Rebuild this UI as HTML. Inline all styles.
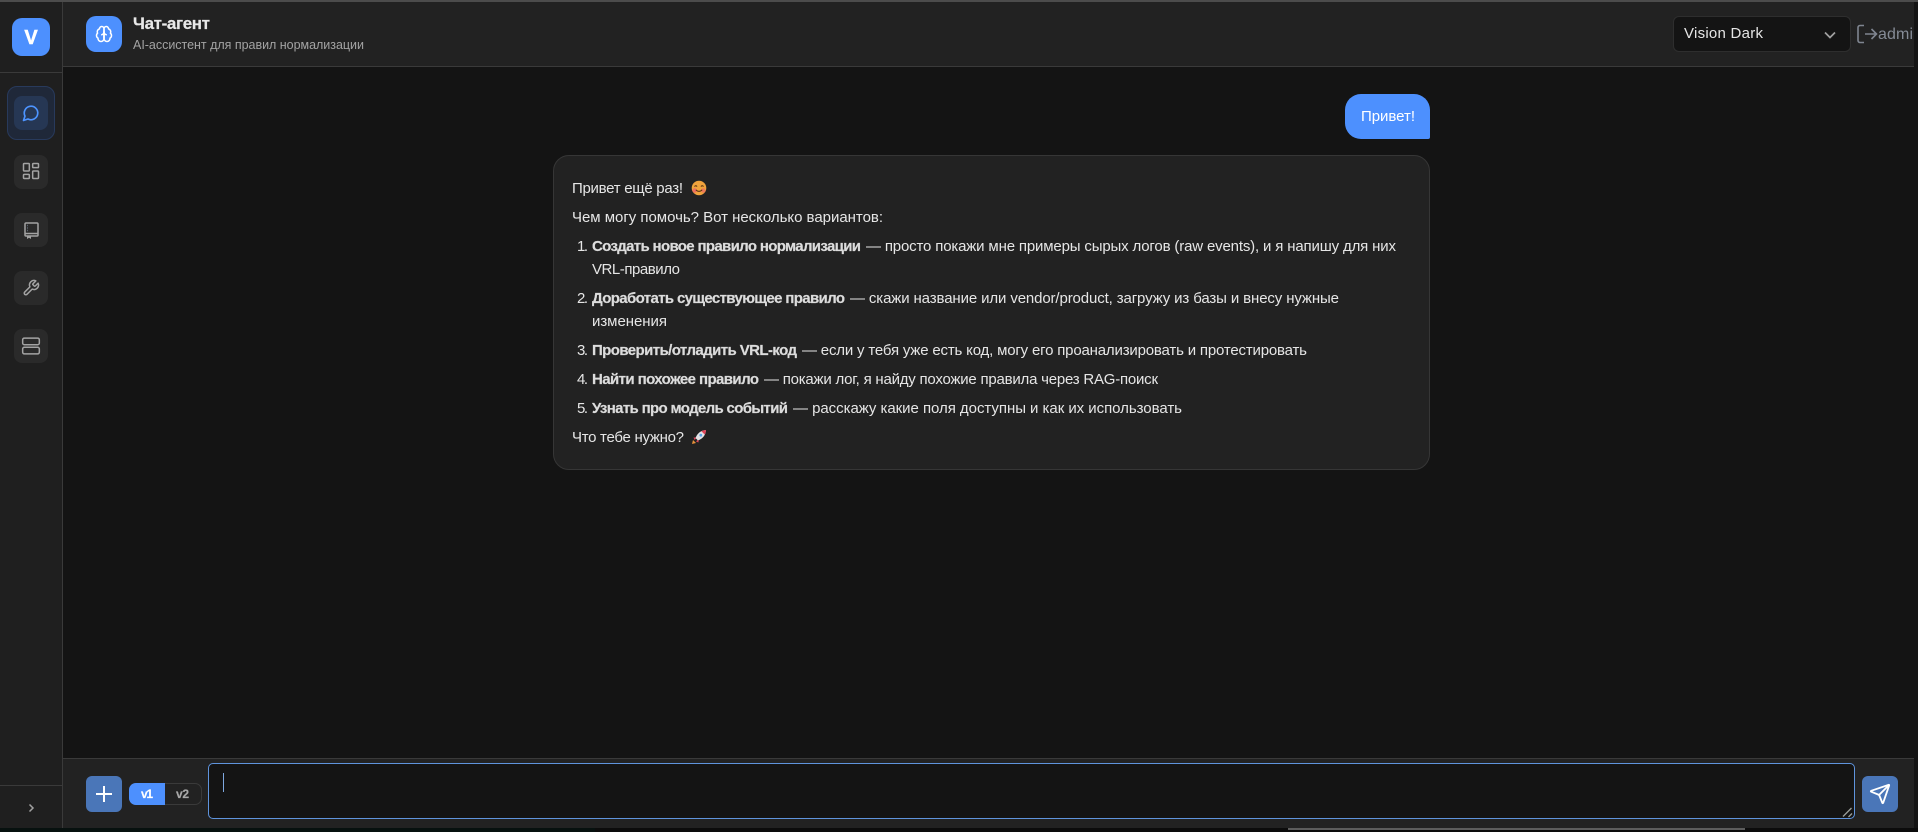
<!DOCTYPE html>
<html lang="ru">
<head>
<meta charset="utf-8">
<title>Чат-агент</title>
<style>
html,body{margin:0;padding:0;width:1918px;height:832px;overflow:hidden;background:#141414}
*{box-sizing:border-box}
.a{position:absolute}
.side{left:0;top:0;width:63px;height:828px;background:#1f1f1f;border-right:1px solid #3a3a3a}
.head{left:63px;top:0;width:1851px;height:67px;background:#222;border-bottom:1px solid #3a3a3a}
.top{left:0;top:0;width:1918px;height:2px;background:#4c4c4c}
.foot{left:63px;top:758px;width:1851px;height:70px;background:#222;border-top:1px solid #3a3a3a}
.strip{left:0;top:828px;width:1918px;height:4px;background:#0c0c0c}
.nav{left:14px;width:34px;height:34px;border-radius:8px;background:#2a2a2a}
.bub{left:553px;top:155px;width:877px;height:315px;background:#222;border:1px solid #363636;border-radius:16px}
.user{left:1345px;top:94px;width:85px;height:45px;background:#4d90fe;border-radius:16px 16px 2px 16px}
.btn{width:36px;height:36px;border-radius:6px;background:#4a76b8}
svg{display:block;overflow:visible}
text{font-family:"Liberation Sans","Noto Sans CJK SC",sans-serif;font-size:15px;fill:#e6e6e6}
.b{font-weight:700;fill:#dcdcdc;stroke:#dcdcdc;stroke-width:.2px}
</style>
</head>
<body>
<div class="a side"></div>
<div class="a" style="left:0;top:72px;width:62px;height:1px;background:#3a3a3a"></div>
<div class="a" style="left:0;top:785px;width:62px;height:1px;background:#3a3a3a"></div>
<div class="a head"></div>
<div class="a foot"></div>
<div class="a top"></div>
<div class="a strip"></div>
<div class="a" style="left:0;top:828px;width:595px;height:4px;background:#07110f"></div>
<div class="a" style="left:1288px;top:828px;width:457px;height:2px;background:#5c5c5c"></div>

<!-- logo -->
<div class="a" style="left:12px;top:18px;width:38px;height:38px;border-radius:10px;background:#4d90fe"></div>
<!-- nav -->
<div class="a" style="left:7px;top:86px;width:48px;height:54px;border-radius:10px;background:#1f2839;border:1px solid #283a5c"></div>
<div class="a nav" style="top:96px;background:#263754"></div>
<div class="a nav" style="top:155px"></div>
<div class="a nav" style="top:213px"></div>
<div class="a nav" style="top:271px"></div>
<div class="a nav" style="top:329px"></div>

<svg class="a" style="left:22px;top:104px" width="18" height="18" viewBox="0 0 24 24" fill="none" stroke="#4d94ff" stroke-width="2.200" stroke-linejoin="round"><path d="M7.900 20A9 9 0 1 0 4 16.100L2 22Z"/></svg>
<svg class="a" style="left:21px;top:161px" width="20" height="20" viewBox="0 0 24 24" fill="none" stroke="#a3a3a3" stroke-width="1.800" stroke-linejoin="round"><rect x="3" y="3" width="7" height="9" rx="1"/><rect x="14" y="3" width="7" height="5" rx="1"/><rect x="14" y="12" width="7" height="9" rx="1"/><rect x="3" y="16" width="7" height="5" rx="1"/></svg>
<svg class="a" style="left:21px;top:220px" width="20" height="20" viewBox="0 0 20 20" fill="none" stroke="#a3a3a3" stroke-width="1.500"><rect x="4" y="3" width="13" height="13" rx="1"/><path d="M6.500 5.500h.5M6.500 8h.5M6.500 10.500h.5" stroke="#8fa0b8"/><path d="M4 13.500h13"/><path d="M6 16v3l2-1.200 2 1.200v-3z" fill="#a3a3a3" stroke="none"/></svg>
<svg class="a" style="left:22px;top:279px" width="18" height="18" viewBox="0 0 24 24" fill="none" stroke="#a3a3a3" stroke-width="2" stroke-linejoin="round"><path d="M14.700 6.300a1 1 0 0 0 0 1.400l1.600 1.600a1 1 0 0 0 1.400 0l3.770-3.770a6 6 0 0 1-7.940 7.940l-6.910 6.910a2.120 2.120 0 0 1-3-3l6.910-6.910a6 6 0 0 1 7.940-7.940l-3.760 3.760z"/></svg>
<svg class="a" style="left:21px;top:336px" width="20" height="20" viewBox="0 0 24 24" fill="none" stroke="#a3a3a3" stroke-width="1.800"><rect x="2" y="2.500" width="20" height="8" rx="2"/><rect x="2" y="13.500" width="20" height="8" rx="2"/><path d="M6 6.500h.01M6 17.500h.01"/></svg>
<svg class="a" style="left:25px;top:802px" width="12" height="12" viewBox="0 0 12 12" fill="none" stroke="#a0a0a0" stroke-width="1.500"><path d="M4.500 2.500 8 6l-3.500 3.500"/></svg>

<!-- header -->
<div class="a" style="left:86px;top:16px;width:36px;height:36px;border-radius:10px;background:#4d90fe"></div>
<svg class="a" style="left:95px;top:25px" width="18" height="18" viewBox="0 0 24 24" fill="none" stroke="#fff" stroke-width="2" stroke-linecap="round" stroke-linejoin="round"><path d="M12 5a3 3 0 1 0-5.997.125 4 4 0 0 0-2.526 5.770 4 4 0 0 0 .556 6.588A4 4 0 1 0 12 18Z"/><path d="M12 5a3 3 0 1 1 5.997.125 4 4 0 0 1 2.526 5.770 4 4 0 0 1-.556 6.588A4 4 0 1 1 12 18Z"/><path d="M15 13a4.500 4.500 0 0 1-3-4 4.500 4.500 0 0 1-3 4"/><path d="M12 9v9"/></svg>
<div class="a" style="left:1673px;top:16px;width:178px;height:36px;border-radius:6px;background:#141414;border:1px solid #2e2e2e"></div>
<svg class="a" style="left:1823px;top:29px" width="14" height="12" viewBox="0 0 14 12" fill="none" stroke="#a0a0a0" stroke-width="1.700"><path d="M2 3.500 7 8.500l5-5"/></svg>
<svg class="a" style="left:1856px;top:24px" width="22" height="20" viewBox="0 0 22 20" fill="none" stroke="#7f8590" stroke-width="1.600"><path d="M8 1.500H4a2 2 0 0 0-2 2v13a2 2 0 0 0 2 2h4"/><path d="M9 10h11M15.500 5l5 5-5 5"/></svg>

<!-- messages -->
<div class="a user"></div>
<div class="a bub"></div>

<!-- emoji drawn as small icons -->
<svg class="a" style="left:691px;top:180px" width="16" height="16" viewBox="0 0 16 16"><circle cx="8" cy="8" r="7.300" fill="#f0a33c"/><circle cx="3.700" cy="10.500" r="2.200" fill="#ef5d6c" opacity=".75"/><circle cx="12.300" cy="10.500" r="2.200" fill="#ef5d6c" opacity=".6"/><path d="M3.500 6.500q1.300-1.500 2.600 0M9.900 6.500q1.300-1.500 2.600 0M4.800 9.800q3.200 3.200 6.400 0" fill="none" stroke="#4a2a10" stroke-width="1"/></svg>
<svg class="a" style="left:691px;top:429px" width="16" height="16" viewBox="0 0 16 16"><path d="M1 15l1-4 3 3z" fill="#e8913a"/><path d="M2.500 8.500h3.500l-2.500 2.500zM7.500 13.500v-3.500l-2.500 2.500z" fill="#e0445a"/><path d="M15 1c-5 .3-8.500 3-10.500 8l2.500 2.500c5-2 7.700-5.500 8-10.500z" fill="#e3e3e6"/><path d="M15 1c-1.700.1-3.200.5-4.600 1.200l3.400 3.400C14.500 4.200 14.900 2.700 15 1z" fill="#e0445a"/><circle cx="9.800" cy="6.200" r="1.400" fill="#5aa6e8"/></svg>

<!-- footer controls -->
<div class="a btn" style="left:86px;top:776px"></div>
<svg class="a" style="left:95px;top:785px" width="18" height="18" viewBox="0 0 18 18" stroke="#fff" stroke-width="2" fill="none"><path d="M9 1v16M1 9h16"/></svg>
<div class="a" style="left:129px;top:783px;width:73px;height:22px;border-radius:7px;border:1px solid #3a3a3a;background:#222"></div>
<div class="a" style="left:129px;top:783px;width:36px;height:22px;border-radius:7px 0 0 7px;background:#4d90fe"></div>
<div class="a" style="left:208px;top:763px;width:1647px;height:56px;border-radius:5px;background:#141414;border:1.500px solid #5f94dd"></div>
<div class="a" style="left:223px;top:773px;width:1px;height:19px;background:#7ea8e0"></div>
<svg class="a" style="left:1842px;top:807px" width="11" height="11" viewBox="0 0 11 11" stroke="#9a9f9a" stroke-width="1.300" fill="none"><path d="M1 9.500 9.500 1M6.500 10 10 6.500"/></svg>
<div class="a btn" style="left:1862px;top:776px"></div>
<svg class="a" style="left:1869px;top:783px" width="22" height="22" viewBox="0 0 24 24" fill="none" stroke="#fff" stroke-width="2" stroke-linejoin="round" stroke-linecap="round"><path d="M14.536 21.686a.5.5 0 0 0 .937-.024l6.500-19a.496.496 0 0 0-.635-.635l-19 6.500a.5.5 0 0 0-.024.937l7.930 3.180a2 2 0 0 1 1.112 1.110z"/><path d="m21.854 2.147-10.940 10.939"/></svg>

<!-- text layer -->
<svg class="a" style="left:0;top:0" width="1918" height="832" viewBox="0 0 1918 832">
<text x="31" y="44" text-anchor="middle" style="font-size:20px;font-weight:700;fill:#fff;stroke:#fff;stroke-width:.5px">V</text>
<text x="133" y="29" textLength="77" lengthAdjust="spacing" class="b" style="font-size:17px;fill:#e8e8e8;stroke:#e8e8e8">Чат-агент</text>
<text x="133" y="49" textLength="231" lengthAdjust="spacing" style="font-size:12.500px;fill:#a3a3a3">AI-ассистент для правил нормализации</text>
<text x="1684" y="38" textLength="79" lengthAdjust="spacing" style="fill:#e6e6e6">Vision Dark</text>
<text x="1878" y="39" textLength="35" lengthAdjust="spacing" style="font-size:16px;fill:#858b96">admi</text>

<text x="1361" y="121" textLength="54" lengthAdjust="spacing" style="fill:#fff">Привет!</text>

<text x="572" y="193" textLength="111" lengthAdjust="spacing">Привет ещё раз!</text>
<text x="572" y="222" textLength="311" lengthAdjust="spacing">Чем могу помочь? Вот несколько вариантов:</text>

<text x="577" y="251" textLength="11" lengthAdjust="spacing">1.</text>
<text x="592" y="251" textLength="269" lengthAdjust="spacing" class="b">Создать новое правило нормализации</text>
<text x="866" y="251" textLength="530" lengthAdjust="spacing">— просто покажи мне примеры сырых логов (raw events), и я напишу для них</text>
<text x="592" y="274" textLength="88" lengthAdjust="spacing">VRL-правило</text>

<text x="577" y="303" textLength="11" lengthAdjust="spacing">2.</text>
<text x="592" y="303" textLength="253" lengthAdjust="spacing" class="b">Доработать существующее правило</text>
<text x="850" y="303" textLength="489" lengthAdjust="spacing">— скажи название или vendor/product, загружу из базы и внесу нужные</text>
<text x="592" y="326" textLength="75" lengthAdjust="spacing">изменения</text>

<text x="577" y="355" textLength="11" lengthAdjust="spacing">3.</text>
<text x="592" y="355" textLength="205" lengthAdjust="spacing" class="b">Проверить/отладить VRL-код</text>
<text x="802" y="355" textLength="505" lengthAdjust="spacing">— если у тебя уже есть код, могу его проанализировать и протестировать</text>

<text x="577" y="384" textLength="11" lengthAdjust="spacing">4.</text>
<text x="592" y="384" textLength="167" lengthAdjust="spacing" class="b">Найти похожее правило</text>
<text x="764" y="384" textLength="394" lengthAdjust="spacing">— покажи лог, я найду похожие правила через RAG-поиск</text>

<text x="577" y="413" textLength="11" lengthAdjust="spacing">5.</text>
<text x="592" y="413" textLength="196" lengthAdjust="spacing" class="b">Узнать про модель событий</text>
<text x="793" y="413" textLength="389" lengthAdjust="spacing">— расскажу какие поля доступны и как их использовать</text>

<text x="572" y="442" textLength="112" lengthAdjust="spacing">Что тебе нужно?</text>

<text x="141" y="798" textLength="12" lengthAdjust="spacing" class="b" style="font-size:12px;fill:#fff;stroke:#fff">v1</text>
<text x="176" y="798" textLength="13" lengthAdjust="spacing" class="b" style="font-size:12px;fill:#a8a8a8;stroke:#a8a8a8">v2</text>
</svg>
</body>
</html>
